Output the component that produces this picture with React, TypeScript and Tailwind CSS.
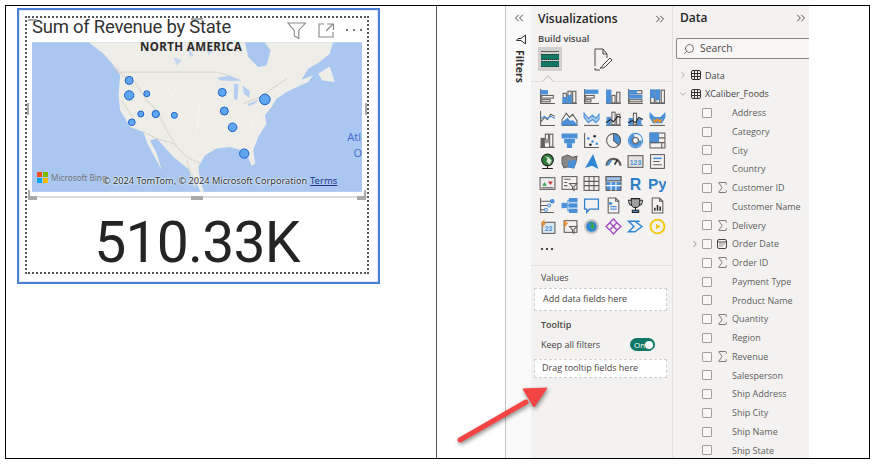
import type { ReactNode } from "react";
import { ChevronDown, ChevronRight, ChevronsLeft, ChevronsRight, Search, Sigma } from "lucide-react";

const B = "#4a90d9";
const G = "#605e5c";

function Ico({ children }: { children: ReactNode }) {
  return (
    <svg width="17" height="17" viewBox="0 0 16 16" fill="none" stroke={G} strokeWidth="1">
      {children}
    </svg>
  );
}

const Base = () => <path d="M1.5 1v13.5H15" />;
const Floor = () => <path d="M1 14.5h14" />;

// visual gallery, row by row
const gallery: ReactNode[] = [
  <><Base /><rect x="2" y="2.5" width="6" height="3" fill={B} stroke={B} /><rect x="2.5" y="7" width="11" height="2.5" /><rect x="2.5" y="11" width="8" height="2" /></>,
  <><Floor /><rect x="2" y="5" width="3" height="9" /><rect x="6.5" y="3" width="3" height="11" /><rect x="11" y="3" width="3" height="11" /><rect x="6.5" y="7" width="3" height="7" fill={B} stroke={B} /><rect x="2" y="9" width="3" height="5" fill={B} stroke={B} /></>,
  <><Base /><rect x="2" y="2" width="12" height="3" fill={B} stroke={B} /><rect x="2.5" y="7" width="8" height="2.5" /><rect x="2.5" y="11" width="5" height="2" /></>,
  <><Floor /><rect x="1.5" y="2" width="4" height="12" fill={B} stroke={B} /><rect x="6.5" y="7" width="3" height="7" /><rect x="11" y="4" width="3" height="10" /></>,
  <><Base /><rect x="2" y="2.5" width="12" height="3" /><rect x="2" y="2.5" width="7" height="3" fill={B} stroke={B} /><rect x="2" y="7" width="12" height="2.5" fill={B} stroke={B} /><rect x="2" y="11" width="12" height="2" /></>,
  <><Floor /><rect x="1.5" y="2" width="3.5" height="12" /><rect x="1.5" y="2" width="3.5" height="7" fill={B} stroke={B} /><rect x="6.5" y="2" width="3.5" height="12" /><rect x="6.5" y="2" width="3.5" height="9" fill={B} stroke={B} /><rect x="11.5" y="2" width="3" height="12" /></>,

  <><Base /><path d="M2 11l3-4 3 2 3-5 4 2" stroke={G} /><path d="M2 8l3-2 3 2 3-2 4 2" stroke={B} /></>,
  <><Floor /><path d="M1 14V9l4-6 3 4 3-3 4 6v4z" /><path d="M1 14v-2l5-4 3 3 2-1 4 4z" fill={B} stroke={B} /></>,
  <><Floor /><path d="M1 3l4 5 4-3 3 3 3-4v5l-3 3-3-3-4 3-4-5z" fill="#a9cdf0" stroke={B} /></>,
  <><Floor /><rect x="2" y="7" width="3" height="7" fill={B} stroke={B} /><rect x="6.5" y="2" width="3" height="12" /><rect x="11" y="4" width="3" height="10" /><path d="M1 12l4-3 3 2 4-5 3 1" stroke="#222" /></>,
  <><Floor /><rect x="2" y="8" width="3" height="6" fill={B} stroke={B} /><rect x="6" y="3" width="3" height="11" /><rect x="10" y="9" width="3" height="5" fill={B} stroke={B} /><path d="M1 12l4-2 3 2 3-5 4 2" stroke="#222" /></>,
  <><Floor /><path d="M1 3l4 4 6 0 4-4v4l-3 5H4L1 7z" fill={B} stroke={B} /><path d="M4 9l2 2 2-2 2 2 2-2" stroke="#e8912d" strokeWidth="2" /></>,

  <><Floor /><rect x="2" y="6" width="3" height="8" fill={G} stroke={G} /><rect x="6" y="2" width="3" height="5" /><rect x="10" y="2" width="3" height="12" /><rect x="6" y="7" width="3" height="3" fill="#9a9896" stroke="#9a9896" /></>,
  <><path d="M1 2h14v3.5H1z" fill={B} stroke={B} /><path d="M3.5 7h9v3h-9z" fill={B} stroke={B} /><path d="M6 11h4v3.5H6z" fill={B} stroke={B} /></>,
  <><Base /><g fill="#222" stroke="none"><circle cx="11" cy="4" r="1.2" /><circle cx="7" cy="12" r="1.2" /></g><g fill={B} stroke="none"><circle cx="5" cy="6" r="1.2" /><circle cx="9" cy="9" r="1.2" /><circle cx="13" cy="11" r="1.2" /></g></>,
  <><circle cx="8" cy="8" r="6.5" /><path d="M8 8V1.5A6.5 6.5 0 0 1 13 12.2z" fill={B} stroke={G} /></>,
  <><circle cx="8" cy="8" r="6.7" stroke={B} strokeWidth="1" /><circle cx="8" cy="8" r="4.6" stroke={B} strokeWidth="3" strokeDasharray="20 9" /><circle cx="8" cy="8" r="2.8" stroke={G} /></>,
  <><rect x="1" y="1" width="14" height="14" /><rect x="1" y="1" width="8" height="9" fill={B} stroke={B} /><path d="M9 5.5h6M12 10v5M1 10h14" /></>,

  <><circle cx="8" cy="6.5" r="5.5" fill="#2f7d3a" stroke="#222" /><path d="M5 3l3 2-1 3 3 3 2-4-3-3" fill="#d9e8d5" stroke="none" /><path d="M3 14.5h10M8 12v2.5" stroke="#222" /></>,
  <><path d="M1 4l5-2 5 2 4-1-1 6-2 5-6-1-3 1-2-4z" fill="#8a8886" stroke={G} /><path d="M7 8l7-1-2 7-5-1z" fill={B} stroke={B} /></>,
  <path d="M9.5 1L14.5 15 8.5 12 2 14z" fill="#2f86d4" stroke="none" />,
  <><path d="M1.5 12a6.5 6.5 0 0 1 13 0" strokeWidth="2" stroke={G} /><path d="M9 11l3-5" stroke="#222" strokeWidth="1.4" /><path d="M3 11.5a5 5 0 0 1 3-4.2" stroke={B} strokeWidth="2" /></>,
  <><rect x="1" y="2.5" width="14" height="11" fill="#e4e2e0" /><text x="8" y="11" textAnchor="middle" fontSize="6.5" fontWeight="700" fill={B} stroke="none" fontFamily="Liberation Sans, sans-serif">123</text></>,
  <><rect x="1.5" y="1.5" width="13" height="13" /><path d="M4 5h8" stroke={B} strokeWidth="1.5" /><path d="M4 8h6M4 11h8" /></>,

  <><rect x="1" y="2.5" width="14" height="11" fill="#eeeeee" /><path d="M3 10l2.2-3.5L7.4 10z" fill="#3aa655" stroke="none" /><path d="M8.4 6h4.6l-2.3 3.5z" fill="#d13438" stroke="none" /><path d="M2.5 12h11" /></>,
  <><rect x="1" y="1.5" width="14" height="12" /><path d="M3 4h6M3 7h3M3 10h3" /><path d="M8 8h7l-2.8 3v3.5l-1.4-1V11z" fill="#e8e6e4" /></>,
  <><rect x="1" y="1.5" width="14" height="13" /><path d="M1 6h14M1 10h14M5.7 1.5v13M10.3 1.5v13" /></>,
  <><rect x="1" y="1.5" width="14" height="13" fill={B} stroke={G} /><path d="M1 6h14M1 10h14M5.7 1.5v13M10.3 1.5v13" stroke="#fff" /><path d="M1 1.5h14v4H1z" fill="#9cc4ec" stroke={G} /></>,
  <text x="8" y="14" textAnchor="middle" fontSize="15" fontWeight="700" fill="#2f7fc9" stroke="none" fontFamily="Liberation Sans, sans-serif">R</text>,
  <text x="8" y="13" textAnchor="middle" fontSize="14.5" fontWeight="700" fill="#2f7fc9" stroke="none" fontFamily="Liberation Sans, sans-serif">Py</text>,

  <><path d="M1.5 1v13.5H14" /><path d="M1.5 4H11M1.5 8H8M1.5 12H5" /><circle cx="12.5" cy="4" r="1.7" fill={B} stroke={B} /><circle cx="9.5" cy="8" r="1.4" stroke={B} /><circle cx="6.5" cy="12" r="1.4" stroke={B} /></>,
  <><rect x="1" y="6" width="4" height="4" fill={B} stroke={B} /><rect x="8" y="1.5" width="7" height="3" fill={B} stroke={B} /><rect x="8" y="6.5" width="7" height="3" fill={B} stroke={B} /><rect x="8" y="11.5" width="7" height="3" fill={B} stroke={B} /><path d="M5 8h3M6.5 3v10H8M6.5 3H8" stroke={B} /></>,
  <path d="M1.5 2h13v9.5H6L3.5 14.5v-3h-2z" stroke="#2f7fc9" strokeWidth="1.2" />,
  <><path d="M3 1h7l3 3v11H3z" /><path d="M10 1v3h3" /><path d="M5 6h2M5 9h6M5 11.5h6" stroke={B} strokeWidth="1.2" /><circle cx="5" cy="6" r="1" fill={B} stroke={B} /></>,
  <><path d="M4 1.5h8v4.5a4 4 0 0 1-8 0z" fill="#a19f9d" stroke="#222" /><path d="M4 3H1.5c0 3 1 4.5 3 5M12 3h2.5c0 3-1 4.5-3 5" stroke="#222" /><path d="M8 10v2.5" stroke="#222" /><path d="M5 14.5h6v-2H5z" fill={B} stroke="#222" /></>,
  <><path d="M3 1h7l3 3v11H3z" /><path d="M10 1v3h3" /><path d="M5.5 13V10M8 13V7.5M10.5 13V9" stroke="#222" strokeWidth="1.4" /></>,

  <><rect x="3" y="4" width="12" height="10.5" fill="#dbe9f6" /><text x="9" y="12.5" textAnchor="middle" fontSize="6.5" fontWeight="700" fill={B} stroke="none" fontFamily="Liberation Sans, sans-serif">23</text><path d="M5.5 0.5L1.5 6h2.5L2.5 10 7 4.5H4.5z" fill="#e8912d" stroke="none" /></>,
  <><rect x="3" y="2.5" width="12" height="11" /><path d="M8 8h7l-2.8 3v3.5l-1.4-1V11z" fill="#e8e6e4" /><path d="M5.5 0.5L1.5 6h2.5L2.5 10 7 4.5H4.5z" fill="#e8912d" stroke="none" /></>,
  <><circle cx="8" cy="8" r="7" fill="#c8c6c4" stroke="none" /><circle cx="8" cy="8" r="5" fill="#2f86d4" stroke="none" /><path d="M5 5l3 1-1 3 3 2 1-4-2-3z" fill="#3aa655" stroke="none" /></>,
  <><path d="M8 1l3.2 3.5L15 8l-3.5 3.2L8 15l-3.5-3.8L1 8l3.5-3.5z" stroke="#a04bc0" strokeWidth="1.3" /><path d="M4.5 4.5L11.5 11.5M11.2 4.5L4.5 11.2" stroke="#a04bc0" strokeWidth="1.3" /></>,
  <path d="M1.5 3h6l6.500 5-6.500 5h-6l5-5zM6 3l6 0" stroke="#2f86d4" strokeWidth="1.4" />,
  <><circle cx="8" cy="8" r="6.5" stroke="#f2c811" strokeWidth="1.8" /><path d="M6.500 5.500L11 8l-4.500 2.500z" fill="#f2c811" stroke="none" /></>,
];

const fields = [
  { name: "Address" },
  { name: "Category" },
  { name: "City" },
  { name: "Country" },
  { name: "Customer ID", sum: true },
  { name: "Customer Name" },
  { name: "Delivery", sum: true },
  { name: "Order Date", date: true },
  { name: "Order ID", sum: true },
  { name: "Payment Type" },
  { name: "Product Name" },
  { name: "Quantity", sum: true },
  { name: "Region" },
  { name: "Revenue", sum: true },
  { name: "Salesperson" },
  { name: "Ship Address" },
  { name: "Ship City" },
  { name: "Ship Name" },
  { name: "Ship State" },
];

const bubbles = [
  [387, 240, 12], [387, 285, 14], [440, 280, 9], [422, 341, 9], [467, 341, 11], [523, 345, 9],
  [395, 366, 10], [667, 276, 12], [673, 332, 12], [698, 381, 13], [733, 460, 14], [795, 297, 16],
];

function MapArt() {
  return (
    <svg viewBox="95 125 992 450" className="absolute inset-0 h-full w-full">
      <rect x="95" y="125" width="992" height="450" fill="#a9c7f0" />
      {/* land */}
      <path
        d="M265 125L310 160L345 200L360 225L355 285L360 330L390 380L430 395L442 430L485 510L470 460L450 420L470 415L520 470L570 510L600 570L600 575L612 575L600 540L595 500L615 465L650 445L690 440L725 450L745 470L755 497L766 490L760 450L775 410L800 370L795 345L815 320L830 295L860 275L895 258L925 245L940 225L905 238L925 205L960 185L990 160L1000 125Z"
        fill="#eeede7"
      />
      <path d="M955 220L990 198L1005 245L968 240Z" fill="#eeede7" />
      {/* water on land */}
      <path d="M735 125L745 170L775 200L800 195L812 150L795 125Z" fill="#a9c7f0" />
      <path d="M650 232L690 226L725 240L695 242L665 240ZM702 250L716 252L712 300L702 295ZM728 255L750 272L748 292L732 280ZM742 312L775 298L770 306L748 318ZM778 292L805 285L800 292L782 298Z" fill="#b4cdf0" />
      <path d="M620 130L640 150L625 165ZM560 130L580 165L570 170ZM520 170L545 180L530 195Z" fill="#c4d6ef" />
      {/* borders and relief */}
      <path d="M347 215H650L690 226M730 310L780 290L860 235M430 395L470 415L520 430L560 470L600 490" fill="none" stroke="#c9c6be" strokeWidth="2" />
      <path d="M400 240L440 300L470 330L500 390L530 440M365 300L410 370M340 195L400 260M560 480L585 560" fill="none" stroke="#e2dfd6" strokeWidth="5" />
      <path d="M780 330L740 400L700 440M600 300L590 400M500 260L560 340" fill="none" stroke="#f6f4ef" strokeWidth="3" />
      {bubbles.map(([x, y, r]) => (
        <circle key={`${x}-${y}`} cx={x} cy={y} r={r} fill="#60a5f0" stroke="#1a62c8" strokeWidth="3" />
      ))}
    </svg>
  );
}

function Handle({ className }: { className: string }) {
  return <div className={`absolute bg-[#a9a9a9] ${className}`} />;
}

function MapCard() {
  return (
    <div className="relative flex h-[258px] w-[344px] flex-col border-2 border-dotted border-[#555]">
      <div className="flex h-[24px] shrink-0 items-start justify-between pl-[5px] pr-[5px]">
        <span className="text-[18.5px] leading-[19px] tracking-[-0.25px] text-[#333] font-['Roboto',sans-serif]">
          Sum of Revenue by State
        </span>
        <div className="mt-[4px] flex items-start gap-[11px]">
          <svg width="20" height="17" viewBox="0 0 20 17" fill="none" stroke="#8a8886" strokeWidth="1.1">
            <path d="M1 1h17.500l-6.700 7.500v8l-4.500-2.500v-5.500z" />
          </svg>
          <svg width="17" height="15" viewBox="0 0 17 15" fill="none" stroke="#8a8886" strokeWidth="1.1" className="mt-[1px]">
            <path d="M6 1H1v13h14V9M9 1h6.500v6M15 1L8 8" />
          </svg>
          <span className="mt-[7px] flex gap-[5px]">
            <i className="h-[2px] w-[2px] bg-[#777]" />
            <i className="h-[2px] w-[2px] bg-[#777]" />
            <i className="h-[2px] w-[2px] bg-[#777]" />
          </span>
        </div>
      </div>
      <div className="relative mx-[5px] h-[150px] shrink-0">
        <MapArt />
        <span className="absolute left-[108px] top-0 text-[11.5px] font-bold leading-[9px] tracking-[0.4px] text-[#2b2b2b] font-['Noto_Sans',sans-serif]">
          NORTH AMERICA
        </span>
        <span className="absolute right-[1px] top-[89px] text-[11px] leading-[12px] text-[#4a6fd0] font-['Noto_Sans',sans-serif]">Atl</span>
        <span className="absolute right-[0px] top-[105px] text-[11px] leading-[12px] text-[#4a6fd0] font-['Noto_Sans',sans-serif]">O</span>
        <div className="absolute left-[5px] top-[130px] grid h-[11px] w-[11px] grid-cols-2 gap-[1px]">
          <i className="bg-[#f25022]" />
          <i className="bg-[#7fba00]" />
          <i className="bg-[#00a4ef]" />
          <i className="bg-[#ffb900]" />
        </div>
        <span className="absolute left-[19px] top-[129px] text-[8.2px] leading-[13px] text-[#767676] font-['Noto_Sans',sans-serif]">
          Microsoft Bing
        </span>
        <span className="absolute left-[71px] top-[132px] whitespace-nowrap text-[9.2px] leading-[13px] text-[#333] font-['Noto_Sans',sans-serif] [text-shadow:0_0_2px_#fff,0_0_2px_#fff]">
          © 2024 TomTom, © 2024 Microsoft Corporation
        </span>
        <span className="absolute left-[278px] top-[132px] text-[9.5px] leading-[13px] text-[#23398f] underline font-['Noto_Sans',sans-serif]">
          Terms
        </span>
      </div>
      <div className="mt-[4px] h-[2px] shrink-0 bg-[#dedede]" />
      <div className="flex flex-1 items-center justify-center pt-[15px] text-[57px] leading-none tracking-[-0.8px] text-[#252423] font-['Roboto',sans-serif]">
        510.33K
      </div>
      {/* resize handles of the focused visual */}
      <Handle className="left-[0px] top-[85px] h-[12px] w-[2px]" />
      <Handle className="right-[0px] top-[85px] h-[12px] w-[2px]" />
      <Handle className="left-[164px] top-[178px] h-[4px] w-[12px]" />
      <Handle className="left-[1px] top-[178px] h-[4px] w-[9px]" />
      <Handle className="right-[1px] top-[178px] h-[4px] w-[9px]" />
      <Handle className="left-[1px] top-[172px] h-[9px] w-[2px]" />
      <Handle className="right-[1px] top-[172px] h-[9px] w-[2px]" />
      <Handle className="left-[1px] top-[1px] h-[2px] w-[9px]" />
      <Handle className="left-[164px] top-[0px] h-[2px] w-[12px]" />
    </div>
  );
}

function Well({ label, className }: { label: string; className: string }) {
  return (
    <div className={`ml-[3px] mr-[5px] flex items-center border border-dashed border-[#d2d0ce] bg-white text-[9px] text-[#484644] ${className}`}>
      {label}
    </div>
  );
}

function VizPane() {
  return (
    <div className="flex w-[142px] shrink-0 flex-col border-r border-[#e1dfdd] bg-[#f3f2f1]">
      <div className="flex h-[23px] items-end justify-between pl-[7px] pr-[5px]">
        <span className="text-[12px] font-semibold leading-[20px] text-[#252423]">Visualizations</span>
        <ChevronsRight size={14} strokeWidth={1.5} className="mb-[3px] text-[#323130]" />
      </div>
      <div className="mt-[3px] pl-[7px] text-[9.3px] font-semibold leading-[14px] text-[#484644]">Build visual</div>
      <div className="mt-[1px] flex h-[24px] items-center pl-[7px]">
        <div className="flex h-[24px] w-[24px] flex-col justify-center gap-[1px] bg-[#d2d0ce] px-[3px]">
          <i className="h-[1px] bg-[#605e5c]" />
          <i className="mt-[1px] h-[6px] border-y border-dotted border-[#333] bg-[#117865]" />
          <i className="h-[6px] border-y border-dotted border-[#333] bg-[#117865]" />
        </div>
        <svg width="22" height="24" viewBox="0 0 22 24" fill="none" stroke="#484644" strokeWidth="1" className="ml-[30px]">
          <path d="M3 19V2h8l4 5v4M3 21v2h5M11 2v5h4" />
          <path d="M8 21c2 0 2-2 3-3l7-7 2 2-7 7c-1 1-3 1-5 1z" />
        </svg>
      </div>
      <div className="relative mt-[10px] h-px bg-[#e1dfdd]">
        <i className="absolute left-[13px] top-[-4px] h-[8px] w-[8px] rotate-45 border-l border-t border-[#c8c6c4] bg-[#f3f2f1]" />
      </div>
      <div className="mt-[4px] grid grid-cols-[repeat(6,22px)] auto-rows-[21.7px] justify-items-center pl-[5px]">
        {gallery.map((icon, i) => (
          <div key={i} className="flex h-[21.7px] items-center">
            <Ico>{icon}</Ico>
          </div>
        ))}
        <div className="flex items-center gap-[3px]">
          <i className="h-[2px] w-[2px] bg-[#484644]" />
          <i className="h-[2px] w-[2px] bg-[#484644]" />
          <i className="h-[2px] w-[2px] bg-[#484644]" />
        </div>
      </div>
      <div className="mt-[5px] h-px bg-[#e1dfdd]" />
      <div className="mt-[5px] pl-[10px] text-[9px] leading-[14px] text-[#484644]">Values</div>
      <Well label="Add data fields here" className="mt-[3px] h-[23px] pl-[8px]" />
      <div className="mt-[7px] pl-[10px] text-[9px] font-semibold leading-[14px] text-[#484644]">Tooltip</div>
      <div className="mt-[6px] flex h-[14px] items-center justify-between pl-[10px] pr-[17px] text-[9px] text-[#484644]">
        Keep all filters
        <span className="flex h-[13px] w-[25px] items-center justify-between rounded-full bg-[#117865] pl-[4px] pr-[2px] text-[8px] leading-none text-white">
          On
          <i className="h-[8px] w-[8px] rounded-full bg-white" />
        </span>
      </div>
      <Well label="Drag tooltip fields here" className="mt-[7px] h-[19px] pl-[7px]" />
    </div>
  );
}

function DataPane() {
  return (
    <div className="flex w-[136px] shrink-0 flex-col bg-[#f3f2f1] pl-[3px]">
      <div className="flex h-[22px] shrink-0 items-end justify-between pl-[4px] pr-[1px]">
        <span className="text-[12px] font-semibold leading-[20px] text-[#252423]">Data</span>
        <ChevronsRight size={14} strokeWidth={1.5} className="mb-[3px] text-[#323130]" />
      </div>
      <div className="mt-[10px] flex h-[21px] shrink-0 items-center gap-[5px] rounded-l-[2px] border border-r-0 border-[#8a8886] bg-[#f8f7f6] pl-[6px] text-[10.3px] text-[#484644]">
        <Search size={12} strokeWidth={1.4} className="-scale-x-100" />
        Search
      </div>
      <div className="mt-[7px] flex h-[18.75px] shrink-0 items-center text-[9px] text-[#484644]">
        <ChevronRight size={10} strokeWidth={1.6} className="ml-[2px] text-[#8a8886]" />
        <TableGlyph />
        <span className="ml-[4px]">Data</span>
      </div>
      <div className="flex h-[18.75px] shrink-0 items-center text-[9px] text-[#484644]">
        <ChevronDown size={10} strokeWidth={1.6} className="ml-[2px] text-[#8a8886]" />
        <TableGlyph />
        <span className="ml-[4px]">XCaliber_Foods</span>
      </div>
      {fields.map((f) => (
        <div key={f.name} className="relative flex h-[18.75px] shrink-0 items-center pl-[26px] text-[9px] text-[#605e5c]">
          {f.date && <ChevronRight size={10} strokeWidth={1.6} className="absolute left-[14px] text-[#605e5c]" />}
          <i className="h-[10px] w-[10px] rounded-[1px] border border-[#a19f9d] bg-[#f8f7f6]" />
          <span className="flex w-[20px] justify-center">
            {f.sum && <Sigma size={15} strokeWidth={1.1} className="text-[#484644]" />}
            {f.date && (
              <svg width="10" height="10" viewBox="0 0 10 10" fill="none" stroke="#484644" strokeWidth="1">
                <rect x="0.500" y="0.500" width="9" height="9" rx="1.500" />
                <path d="M0.500 3h9M2.500 5h1M4.500 5h1M6.500 5h1M2.500 7h1M4.500 7h1" />
              </svg>
            )}
          </span>
          {f.name}
        </div>
      ))}
    </div>
  );
}

function TableGlyph() {
  return (
    <svg width="10" height="10" viewBox="0 0 10 10" fill="none" stroke="#323130" strokeWidth="1" className="ml-[3px]">
      <rect x="0.500" y="0.500" width="9" height="9" rx="1.500" />
      <path d="M0.500 3.500h9M0.500 6.500h9M3.500 0.500v9M6.500 0.500v9" />
    </svg>
  );
}

export default function App() {
  return (
    <div className="h-[467px] w-[875px] overflow-hidden bg-white pl-[5px] pt-[5px] font-['Open_Sans',sans-serif]">
      <div className="relative flex h-[454px] w-[865px] border border-black">
        {/* left cell */}
        <div className="w-[431px] shrink-0 border-r border-[#555] pl-[11px] pt-[2px]">
          <div className="flex h-[276px] w-[363px] items-start border-2 border-[#4a7fd4] bg-white pl-[6px] pt-[6px] shadow-[inset_0_0_0_1px_#dfe8f7]">
            <MapCard />
          </div>
        </div>
        {/* right cell */}
        <div className="flex h-full flex-1 overflow-hidden pl-[68px]">
          <div className="flex w-[26px] shrink-0 flex-col items-center border-l border-[#c8c6c4] bg-[#fbfafa]">
            <ChevronsLeft size={14} strokeWidth={1.5} className="mt-[5px] text-[#323130]" />
            <svg width="10" height="11" viewBox="0 0 10 11" fill="none" stroke="#323130" strokeWidth="1" className="ml-[4px] mt-[9px] rotate-90">
              <path d="M0.500 1h9L6 5.500V10L4 8.500v-3z" />
            </svg>
            <span className="ml-[2px] mt-[5px] text-[10.5px] font-bold leading-[14px] text-[#323130] [writing-mode:vertical-rl]">
              Filters
            </span>
          </div>
          <VizPane />
          <DataPane />
        </div>
        {/* callout arrow */}
        <svg width="100" height="66" viewBox="0 0 100 66" className="absolute left-[448px] top-[376px] drop-shadow-[1px_2px_2px_rgba(0,0,0,0.45)]">
          <path d="M6 58L72 20" stroke="#f44545" strokeWidth="5" strokeLinecap="round" />
          <path d="M93 6L69 7L80 25Z" fill="#f44545" stroke="#f44545" strokeWidth="1" />
        </svg>
      </div>
    </div>
  );
}
